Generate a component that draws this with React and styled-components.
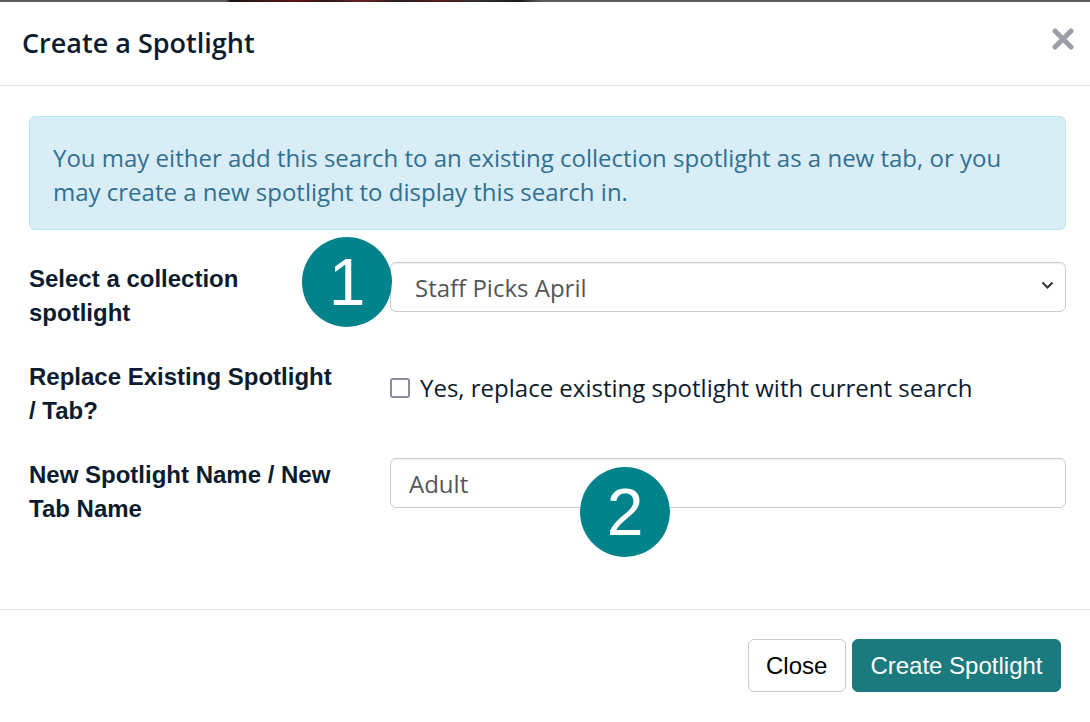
import React from "react";
import styled, { createGlobalStyle } from "styled-components";

const GlobalStyle = createGlobalStyle`
  html, body {
    margin: 0;
    padding: 0;
    background: #fff;
  }
  * {
    box-sizing: border-box;
  }
`;

const Backdrop = styled.div`
  height: 2px;
  background: linear-gradient(
    to right,
    #5c5c5c 0,
    #5c5c5c 226px,
    #1c1414 230px,
    #3a1616 260px,
    #5e1212 300px,
    #2a1a1a 330px,
    #6b2222 360px,
    #242020 400px,
    #5a1a1a 440px,
    #303030 480px,
    #1a1a1a 520px,
    #5c5c5c 540px,
    #5c5c5c 100%
  );
`;

const Modal = styled.div`
  position: relative;
  width: 1090px;
  background: #fff;
`;

const Header = styled.div`
  display: flex;
  align-items: center;
  justify-content: space-between;
  padding: 22px 15px 23px 22px;
  border-bottom: 1px solid #e5e5e5;
`;

const Title = styled.h4`
  margin: 0;
  font-family: "Open Sans", sans-serif;
  font-size: 27px;
  font-weight: 600;
  line-height: 38px;
  color: #0c1c2e;
`;

const CloseX = styled.button`
  display: flex;
  align-items: center;
  justify-content: center;
  width: 24px;
  height: 24px;
  padding: 0;
  margin-bottom: 8px;
  border: 0;
  background: none;
  cursor: pointer;
`;

const Body = styled.div`
  padding: 30px 24px 83px 29px;
`;

const Alert = styled.div`
  padding: 24px 23px 20px;
  margin-bottom: 32px;
  border: 1px solid #bce8f1;
  border-radius: 6px;
  background: #d9edf7;
  color: #31708f;
  font-family: "Open Sans", sans-serif;
  font-size: 24px;
  line-height: 34px;
`;

const Form = styled.form`
  display: flex;
  flex-direction: column;
  gap: 30px;
`;

const Row = styled.div`
  display: grid;
  grid-template-columns: 361px 1fr;
  align-items: start;
  min-height: 68px;
`;

const Label = styled.label`
  width: 312px;
  font-family: "Liberation Sans", Arial, sans-serif;
  font-size: 24px;
  font-weight: 700;
  line-height: 34px;
  color: #0c1c2e;
`;

const SelectWrap = styled.div`
  position: relative;
  height: 50px;
`;

const Select = styled.select`
  appearance: none;
  width: 100%;
  height: 50px;
  padding: 0 48px 0 24px;
  border: 1px solid #ccc;
  border-radius: 6px;
  background: #fff;
  font-family: "Open Sans", sans-serif;
  font-size: 24px;
  color: #555;
  box-shadow: inset 0 1px 1px rgba(0, 0, 0, 0.06);
`;

const Chevron = styled.svg`
  position: absolute;
  right: 12px;
  top: 19px;
  pointer-events: none;
`;

const Input = styled.input`
  width: 100%;
  height: 50px;
  padding: 0 18px;
  border: 1px solid #ccc;
  border-radius: 6px;
  font-family: "Open Sans", sans-serif;
  font-size: 24px;
  color: #555;
  box-shadow: inset 0 1px 1px rgba(0, 0, 0, 0.06);
`;

const CheckLine = styled.label`
  display: flex;
  align-items: center;
  gap: 10px;
  padding-top: 11px;
  font-family: "Open Sans", sans-serif;
  font-size: 24px;
  line-height: 34px;
  color: #0c1c2e;
`;

const Box = styled.span`
  width: 20px;
  height: 20px;
  border: 2px solid #8e8c9c;
  border-radius: 3px;
  background: #fff;
  flex-shrink: 0;
`;

const Footer = styled.div`
  display: flex;
  justify-content: flex-end;
  gap: 6px;
  padding: 29px 29px 30px;
  border-top: 1px solid #e5e5e5;
`;

const Button = styled.button`
  height: 53px;
  padding: 0 17.5px;
  border: 1px solid ${(p) => (p.$primary ? "#1b7a7e" : "#ccc")};
  border-radius: 6px;
  background: ${(p) => (p.$primary ? "#1b7a7e" : "#fff")};
  color: ${(p) => (p.$primary ? "#fff" : "#000")};
  font-family: "Liberation Sans", Arial, sans-serif;
  font-size: 24px;
  line-height: 34px;
  cursor: pointer;
`;

const Step = styled.div`
  position: absolute;
  left: ${(p) => p.$x}px;
  top: ${(p) => p.$y}px;
  width: 90px;
  height: 90px;
  border-radius: 50%;
  background: #02838b;
  color: #fff;
  display: flex;
  align-items: center;
  justify-content: center;
  font-family: "Liberation Sans", Arial, sans-serif;
  font-size: 66px;
  line-height: 1;
`;

export default function App() {
  return (
    <>
      <GlobalStyle />
      <Backdrop />
      <Modal>
        <Header>
          <Title>Create a Spotlight</Title>
          <CloseX aria-label="Close">
            <svg width="22" height="22" viewBox="0 0 22 22">
              <path
                d="M3 3 L19 19 M19 3 L3 19"
                stroke="#999fa6"
                strokeWidth="5"
                strokeLinecap="round"
              />
            </svg>
          </CloseX>
        </Header>
        <Body>
          <Alert>
            You may either add this search to an existing collection spotlight
            as a new tab, or you may create a new spotlight to display this
            search in.
          </Alert>
          <Form>
            <Row>
              <Label>Select a collection spotlight</Label>
              <SelectWrap>
                <Select defaultValue="april">
                  <option value="april">Staff Picks April</option>
                </Select>
                <Chevron width="13" height="9" viewBox="0 0 13 9">
                  <path
                    d="M1.5 1.5 L6.5 6.5 L11.5 1.5"
                    fill="none"
                    stroke="#333"
                    strokeWidth="2"
                  />
                </Chevron>
              </SelectWrap>
            </Row>
            <Row>
              <Label>Replace Existing Spotlight / Tab?</Label>
              <CheckLine>
                <Box />
                Yes, replace existing spotlight with current search
              </CheckLine>
            </Row>
            <Row>
              <Label>New Spotlight Name / New Tab Name</Label>
              <Input defaultValue="Adult" />
            </Row>
          </Form>
        </Body>
        <Footer>
          <Button type="button">Close</Button>
          <Button type="button" $primary>
            Create Spotlight
          </Button>
        </Footer>
        <Step $x={302} $y={235}>1</Step>
        <Step $x={580} $y={465}>2</Step>
      </Modal>
    </>
  );
}
